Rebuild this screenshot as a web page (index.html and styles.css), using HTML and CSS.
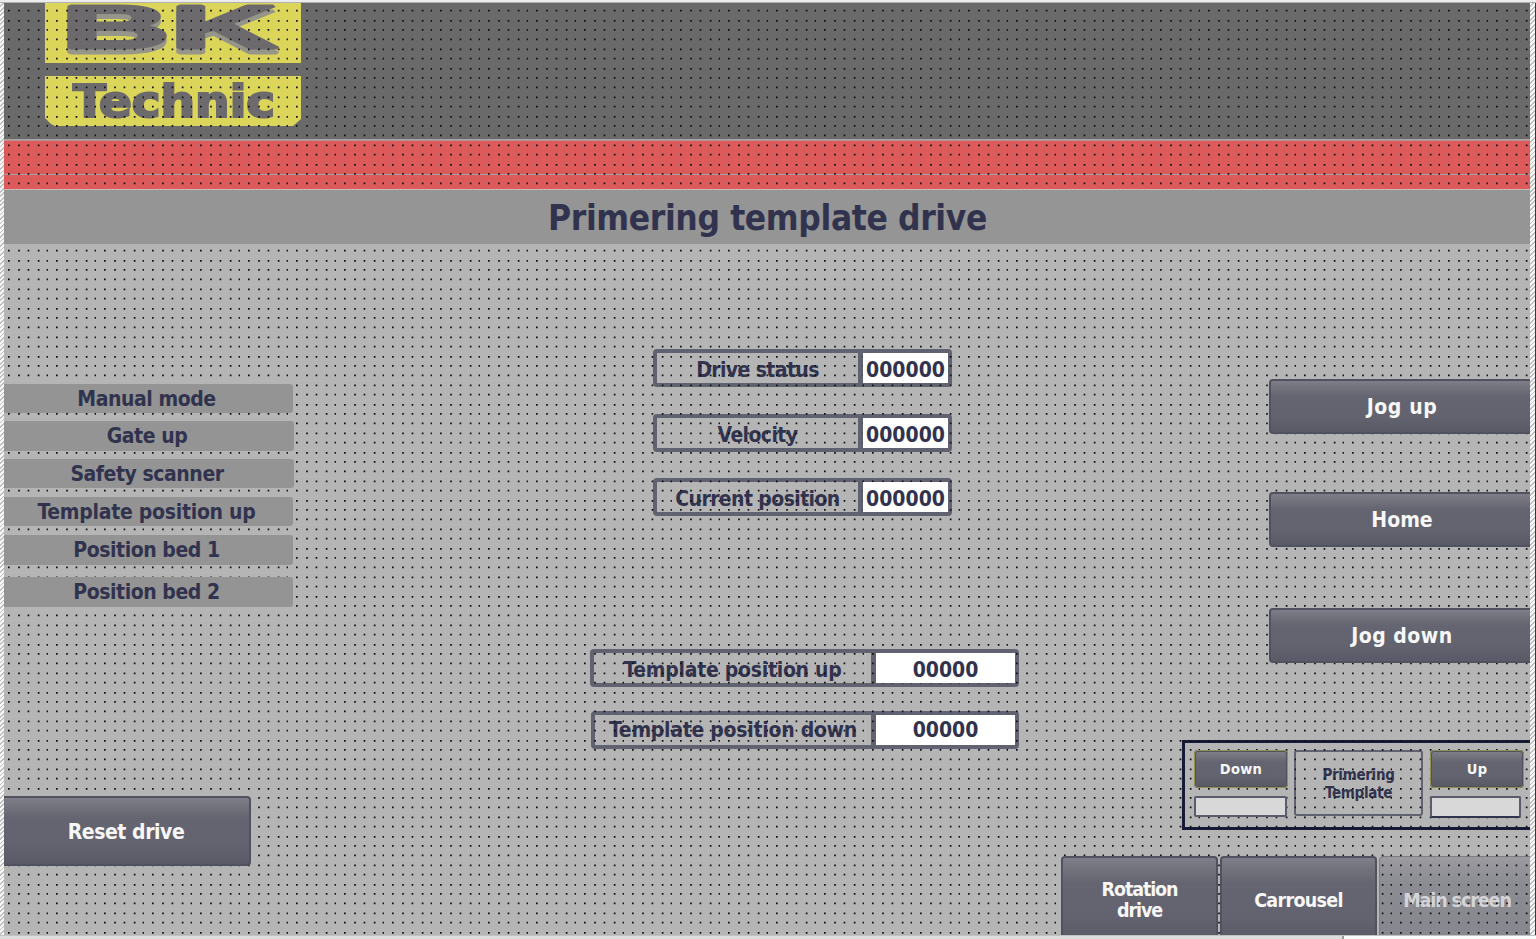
FILE: index.html
```
<!DOCTYPE html>
<html lang="en">
<head>
<meta charset="utf-8">
<title>Primering template drive</title>
<link rel="stylesheet" href="styles.css">
</head>
<body>
<main class="editor">
  <div class="ruler"></div>
  <div class="hatch"></div>
  <section class="screen">
    <header class="banner">
      <svg class="logo" width="257" height="125" viewBox="44 3 257 125">
        <path class="logo-plate" d="M45 3H301V63H45ZM45 76H301V119L293 126H55L51 124L45 118Z"/>
        <g class="logo-bk">
          <text x="61" y="48" textLength="109" lengthAdjust="spacingAndGlyphs">B</text>
          <text x="170" y="48" textLength="108" lengthAdjust="spacingAndGlyphs">K</text>
        </g>
        <text class="logo-sub" x="73" y="117" textLength="202" lengthAdjust="spacingAndGlyphs">Technic</text>
      </svg>
    </header>
    <div class="stripe stripe-wide"></div>
    <div class="stripe stripe-thin"></div>
    <h1 class="title"><span>Primering template drive</span></h1>

    <svg class="grid" width="1526" height="932">
      <defs>
        <pattern id="dots" width="48" height="48" patternUnits="userSpaceOnUse" x="-4" y="-3">
          <g class="dot-row" id="row">
            <path d="M8 9.8h1.7v1.7h-1.7zM18.2 9.8h1.7v1.7h-1.7zM27.6 9.8h1.7v1.7h-1.7zM37.8 9.8h1.7v1.7h-1.7zM46.6 9.8h1.4v1.7h-1.4z"/>
          </g>
          <use href="#row" y="10.3"/><use href="#row" y="19.3"/><use href="#row" y="28.7"/><use href="#row" y="-9.3"/>
        </pattern>
      </defs>
      <rect width="1526" height="932" fill="url(#dots)"/>
    </svg>

    <div class="status s1"><span>Manual mode</span></div>
    <div class="status s2"><span>Gate up</span></div>
    <div class="status s3"><span>Safety scanner</span></div>
    <div class="status s4"><span>Template position up</span></div>
    <div class="status s5"><span>Position bed 1</span></div>
    <div class="status s6"><span>Position bed 2</span></div>

    <div class="field f1"><span class="name">Drive status</span><span class="value">000000</span></div>
    <div class="field f2"><span class="name">Velocity</span><span class="value">000000</span></div>
    <div class="field f3"><span class="name">Current position</span><span class="value">000000</span></div>
    <div class="field wide f4"><span class="name">Template position up</span><span class="value">00000</span></div>
    <div class="field wide f5"><span class="name">Template position down</span><span class="value">00000</span></div>

    <div class="button jog j1">Jog up</div>
    <div class="button jog j2">Home</div>
    <div class="button jog j3">Jog down</div>
    <div class="button reset">Reset drive</div>

    <div class="panel">
      <div class="stack"><div class="button small">Down</div><div class="bar"></div></div>
      <div class="caption">Primering<br>Template</div>
      <div class="stack"><div class="button small">Up</div><div class="bar up-bar"></div></div>
    </div>

    <nav class="nav">
      <div class="button tab rotation">Rotation<br>drive</div>
      <div class="button tab">Carrousel</div>
    </nav>
    <div class="main-link">Main screen</div>
  </section>
  <div class="hatch right"></div>
  <div class="scroll"><div class="thumb"></div></div>
</main>
</body>
</html>
```
FILE: styles.css
```
* { box-sizing: border-box; }
body { margin: 0; overflow: hidden; background: #e9e9e9; font-family: "DejaVu Sans Condensed", "DejaVu Sans", sans-serif; font-weight: bold; color: #31334e; font-stretch: condensed; }
.editor { width: 1536px; height: 939px; display: grid; grid-template: 3px 932px 4px / 4px 1526px 6px; }
.ruler { grid-column: 1 / 4; background: linear-gradient(#ececec 2px, #b0b0b0 2px); }
.hatch { background: repeating-linear-gradient(135deg, #f8f8f8 0 2px, #bdbdbd 2px 3.2px); }
.hatch.right { border-right: 1px solid #34383d; }
.screen { position: relative; overflow: hidden; background: #b5b5b5; }
.scroll { grid-column: 1 / 4; background: #fbfbfb; border-top: 1px solid #c2c2c2; }
.thumb { width: 1344px; height: 4px; background: #dedede; border-right: 2px solid #9a9a9a; }

.banner { height: 137px; padding-left: 40px; background: #6a6a6a; border-bottom: 1px solid #a8a3a3; }
.logo { display: block; }
.logo-plate { fill: #dbd65a; }
.logo-bk { fill: #6c6a6c; stroke: #6c6a6c; stroke-width: 3; stroke-linejoin: bevel; font-family: "Liberation Sans", sans-serif; font-size: 61px; filter: drop-shadow(0 5px 0 #96958a); }
.logo-sub { fill: #6c6a6c; stroke: #6c6a6c; stroke-width: 2; font-size: 44px; }
.stripe { background: #dc5a5a; border-top: 1px solid #b98f91; }
.stripe-wide { height: 34px; }
.stripe-thin { height: 15px; border-top-color: #aaa0a3; }
.title { position: relative; z-index: 2; margin: 0; height: 55px; background: #959595; border-top: 1px solid #c4bcbc; display: flex; justify-content: center; align-items: center; font-size: 35px; line-height: 53px; letter-spacing: -0.37px; padding: 2px 0 0 1px; white-space: nowrap; }

.grid { position: absolute; inset: 0; z-index: 1; pointer-events: none; }
.dot-row { fill: #101013; }

.status { position: absolute; z-index: 2; left: -4px; width: 293px; height: 29px; display: flex; align-items: center; justify-content: center; background: #949494; border-radius: 0 3px 3px 0; font-size: 21px; letter-spacing: -0.45px; white-space: nowrap; }
.s1 { top: 381px; }
.s2 { top: 418px; height: 30px; width: 294px; }
.s3 { top: 456px; width: 294px; }
.s4 { top: 494px; letter-spacing: -0.27px; }
.s5 { top: 532px; height: 30px; }
.s6 { top: 574px; height: 30px; }

.field { position: absolute; left: 649px; width: 299px; height: 38px; display: flex; border: 4px solid #616270; border-radius: 4px; font-size: 21px; line-height: 35px; text-align: center; white-space: nowrap; }
.name { width: 206px; border-right: 5px solid #616270; letter-spacing: -0.6px; }
.value { position: relative; z-index: 2; flex: 1; background: #fff; }
.f1 { top: 346px; }
.f2 { top: 411px; }
.f3 { top: 475px; }
.wide { left: 586px; width: 429px; }
.wide .name { width: 282px; letter-spacing: -0.27px; }
.f4 { top: 646px; }
.f5 { top: 708px; left: 587px; width: 428px; line-height: 31px; }
.wide.f5 .name { width: 281px; }

.button { display: flex; align-items: center; justify-content: center; text-align: center; color: #f7f7f7; border: 2px solid #515260; border-radius: 4px; background: linear-gradient(#7e7d88, #646570 30%, #62636e 70%, #595a66); font-size: 21px; }
.jog { position: absolute; z-index: 2; left: 1265px; width: 266px; height: 55px; }
.j1 { top: 376px; letter-spacing: 0.6px; }
.j2 { top: 489px; }
.j3 { top: 605px; letter-spacing: 0.5px; }
.reset { position: absolute; z-index: 2; left: -4px; top: 793px; width: 251px; height: 70px; padding: 2px 0 0 1px; letter-spacing: -0.45px; }

.panel { position: absolute; left: 1178px; top: 737px; width: 360px; height: 90px; display: flex; gap: 6px; padding: 7px 9px; border: 3px solid #171a36; }
.stack { position: relative; z-index: 2; width: 94px; display: flex; flex-direction: column; gap: 8px; }
.small { height: 38px; font-size: 14.5px; letter-spacing: 0.3px; outline: 1px solid #92924f; outline-offset: -1px; }
.bar { width: 93px; height: 21px; background: #d8d8d8; border: 2px solid #5a5c6d; border-radius: 2px; }
.up-bar { width: 91px; height: 22px; border-bottom-color: #30344d; }
.caption { width: 129px; height: 66px; margin-right: 1px; padding-top: 14px; border: 2px solid #616270; border-radius: 3px; font-size: 15px; line-height: 18px; letter-spacing: -0.3px; text-align: center; }

.nav { position: absolute; z-index: 2; left: 1057px; top: 853px; display: flex; gap: 2px; }
.tab { width: 157px; height: 88px; font-size: 19.5px; line-height: 21px; letter-spacing: -0.7px; }
.rotation { letter-spacing: -1.1px; }
.main-link { position: absolute; left: 1375px; top: 853px; width: 156px; height: 88px; line-height: 88px; text-align: center; font-size: 19.5px; letter-spacing: -1.1px; color: #d4d4d6; border: 1px solid #7d7d85; border-radius: 4px; background: linear-gradient(#9b9ba0, #8c8d93 30%, #86878e); }
```
